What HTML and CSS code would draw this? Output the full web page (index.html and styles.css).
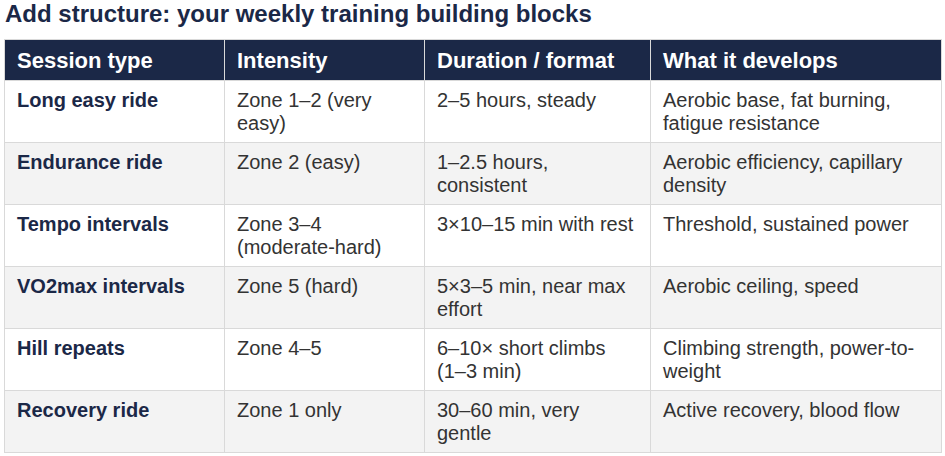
FILE: index.html
```html
<!DOCTYPE html>
<html lang="en">
<head>
<meta charset="utf-8">
<title>Weekly training building blocks</title>
<link rel="stylesheet" href="styles.css">
</head>
<body>
<main class="page">
  <h1 class="title">Add structure: your weekly training building blocks</h1>
  <table class="blocks">
    <colgroup>
      <col class="c1"><col class="c2"><col class="c3"><col class="c4">
    </colgroup>
    <thead>
      <tr>
        <th>Session type</th>
        <th>Intensity</th>
        <th>Duration / format</th>
        <th>What it develops</th>
      </tr>
    </thead>
    <tbody>
      <tr>
        <td class="name">Long easy ride</td>
        <td>Zone 1–2 (very easy)</td>
        <td>2–5 hours, steady</td>
        <td>Aerobic base, fat burning, fatigue resistance</td>
      </tr>
      <tr>
        <td class="name">Endurance ride</td>
        <td>Zone 2 (easy)</td>
        <td>1–2.5 hours, consistent</td>
        <td>Aerobic efficiency, capillary density</td>
      </tr>
      <tr>
        <td class="name">Tempo intervals</td>
        <td>Zone 3–4 (moderate-hard)</td>
        <td>3×10–15 min with rest</td>
        <td>Threshold, sustained power</td>
      </tr>
      <tr>
        <td class="name">VO2max intervals</td>
        <td>Zone 5 (hard)</td>
        <td>5×3–5 min, near max effort</td>
        <td>Aerobic ceiling, speed</td>
      </tr>
      <tr>
        <td class="name">Hill repeats</td>
        <td>Zone 4–5</td>
        <td>6–10× short climbs (1–3 min)</td>
        <td>Climbing strength, power-to-weight</td>
      </tr>
      <tr>
        <td class="name">Recovery ride</td>
        <td>Zone 1 only</td>
        <td>30–60 min, very gentle</td>
        <td>Active recovery, blood flow</td>
      </tr>
    </tbody>
  </table>
</main>
</body>
</html>
```

FILE: styles.css
```css
html, body {
  margin: 0;
  padding: 0;
  background: #ffffff;
}

body {
  font-family: "Liberation Sans", Arial, sans-serif;
  color: #333333;
}

.page {
  padding: 0 4px;
}

.title {
  margin: 0 0 11px 1px;
  font-size: 24px;
  font-weight: bold;
  line-height: 1.15;
  color: #1b2847;
}

.blocks {
  width: 937px;
  border-collapse: collapse;
  table-layout: fixed;
}

.c1 { width: 220px; }
.c2 { width: 200px; }
.c3 { width: 226px; }
.c4 { width: 291px; }

.blocks th,
.blocks td {
  border: 1px solid #d9d9d9;
  text-align: left;
  vertical-align: top;
}

.blocks th {
  background: #1b2847;
  color: #ffffff;
  font-size: 22px;
  font-weight: bold;
  line-height: 25px;
  padding: 8px 12px 7px;
}

.blocks td {
  font-size: 20px;
  line-height: 23px;
  padding: 8px 12px 7px;
}

.blocks tbody tr:nth-child(even) td {
  background: #f3f3f3;
}

.blocks td.name {
  font-weight: bold;
  color: #1b2847;
}
```
